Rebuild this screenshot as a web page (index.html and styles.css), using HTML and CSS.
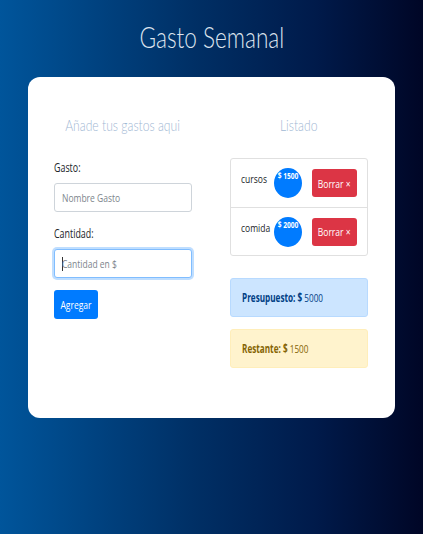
FILE: index.html
```html
<!DOCTYPE html>
<html lang="es">
<head>
<meta charset="utf-8">
<title>Gasto Semanal</title>
<link rel="stylesheet" href="styles.css">
</head>
<body>
<div class="page">
  <h1 class="title"><span class="cn-c">Gasto Semanal</span></h1>
  <div class="card">
    <div class="col">
      <h2 class="subtitle"><span class="cn-c">Añade tus gastos aqui</span></h2>
      <form class="form">
        <label class="label"><span class="cn">Gasto:</span></label>
        <div class="input"><span class="cn ph">Nombre Gasto</span></div>
        <label class="label label-2"><span class="cn">Cantidad:</span></label>
        <div class="input input-focus"><span class="caret"></span><span class="cn ph">Cantidad en $</span></div>
        <button class="btn-add" type="button"><span class="cn-c">Agregar</span></button>
      </form>
    </div>
    <div class="col">
      <h2 class="subtitle"><span class="cn-c">Listado</span></h2>
      <ul class="list">
        <li class="item">
          <span class="item-name"><span class="cn">cursos</span></span>
          <span class="badge"><span class="cn-c">$ 1500</span></span>
          <button class="btn-del" type="button"><span class="cn-c">Borrar &times;</span></button>
        </li>
        <li class="item">
          <span class="item-name"><span class="cn">comida</span></span>
          <span class="badge"><span class="cn-c">$ 2000</span></span>
          <button class="btn-del" type="button"><span class="cn-c">Borrar &times;</span></button>
        </li>
      </ul>
      <div class="alert alert-info"><span class="cn"><b>Presupuesto: $</b> 5000</span></div>
      <div class="alert alert-warn"><span class="cn"><b>Restante: $</b> 1500</span></div>
    </div>
  </div>
</div>
</body>
</html>
```
FILE: styles.css
```css
* { box-sizing: border-box; }
html, body { margin: 0; padding: 0; }
body {
  min-height: 534px;
  background: linear-gradient(to right, #00559b 0%, #003066 45%, #001a4a 75%, #000626 100%);
  font-family: "Open Sans", "Liberation Sans", sans-serif;
  color: #212529;
}
.cn, .cn-c {
  display: inline-block;
  white-space: nowrap;
  transform: scaleX(0.74);
}
.cn { transform-origin: left center; }
.cn-c { transform-origin: center center; }
.page {
  padding-top: 19px;
}
.title {
  margin: 0;
  text-align: center;
  font-family: "Lato", sans-serif;
  font-weight: 300;
  font-size: 29px;
  line-height: 36px;
  color: #dde4ee;
}
.title .cn-c { transform: scaleX(0.78); }
.card {
  margin: 22px 28px 0 28px;
  height: 341px;
  background: #fff;
  border-radius: 12px;
  padding: 38px 27px 0 26px;
  display: grid;
  grid-template-columns: 138px 138px;
  column-gap: 38px;
  align-content: start;
}
.subtitle {
  margin: 0;
  display: flex;
  justify-content: center;
  font-family: "Lato", sans-serif;
  font-weight: 300;
  font-size: 16px;
  line-height: 20px;
  color: #9fb8d4;
  white-space: nowrap;
}
.subtitle .cn-c { transform: scaleX(0.76); flex: none; }
.form {
  display: flex;
  flex-direction: column;
  align-items: flex-start;
  padding-top: 26px;
}
.label {
  font-size: 12px;
  line-height: 14px;
  margin-bottom: 8px;
}
.label-2 { margin-top: 15px; }
.input {
  position: relative;
  width: 138px;
  height: 29px;
  border: 1px solid #ced4da;
  border-radius: 3px;
  padding: 0 7px;
  font-size: 11.5px;
  line-height: 27px;
  background: #fff;
}
.ph { color: #7d858c; }
.input-focus {
  border-color: #80bdff;
  box-shadow: 0 0 0 2px rgba(0, 123, 255, 0.25);
}
.caret {
  position: absolute;
  left: 7px;
  top: 7px;
  width: 1px;
  height: 14px;
  background: #333;
}
.btn-add {
  margin-top: 12px;
  width: 44px;
  height: 29px;
  padding: 0;
  border: none;
  border-radius: 3px;
  background: #007bff;
  color: #fff;
  font-family: inherit;
  font-size: 11.5px;
}
.list {
  list-style: none;
  margin: 23px 0 0 0;
  padding: 0;
  border: 1px solid #e0e0e0;
  border-radius: 3px;
}
.item {
  height: 48px;
  display: flex;
  align-items: center;
  padding: 0 10px;
}
.item + .item { border-top: 1px solid #e0e0e0; }
.item-name {
  font-size: 11.5px;
  width: 33px;
  margin-top: -9px;
}
.badge {
  width: 28px;
  height: 30px;
  border-radius: 14px / 15px;
  background: #007bff;
  color: #fff;
  font-size: 9px;
  font-weight: bold;
  text-align: center;
  padding-top: 2px;
  line-height: 11px;
  white-space: nowrap;
}
.btn-del {
  margin-left: 10px;
  width: 45px;
  height: 28px;
  border: none;
  border-radius: 3px;
  background: #dc3545;
  color: #fff;
  font-family: inherit;
  font-size: 11.5px;
  padding: 0;
}
.alert {
  height: 39px;
  border-radius: 3px;
  display: flex;
  align-items: center;
  padding: 0 11px;
  font-size: 11.5px;
}
.alert .cn { transform: scaleX(0.71); }
.alert-info {
  margin-top: 22px;
  background: #cce5ff;
  border: 1px solid #b8daff;
  color: #004085;
}
.alert-warn {
  margin-top: 12px;
  background: #fff3cd;
  border: 1px solid #ffeeba;
  color: #856404;
}
```
